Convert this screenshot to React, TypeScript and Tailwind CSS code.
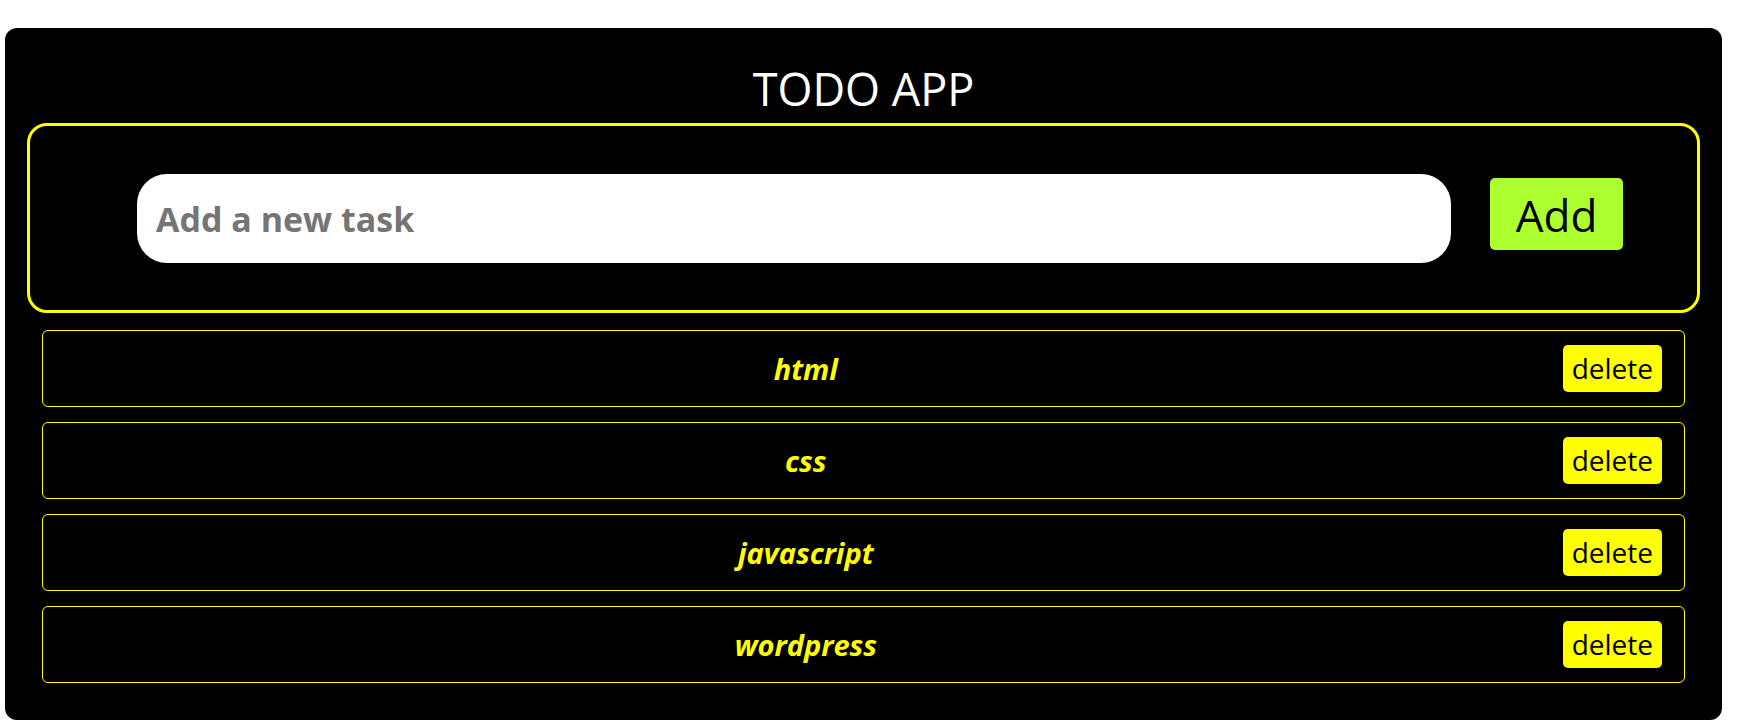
import { useState } from "react";

const initialTasks = ["html", "css", "javascript", "wordpress"];

export default function App() {
  const [tasks, setTasks] = useState(initialTasks);
  const [value, setValue] = useState("");

  const addTask = () => {
    if (!value.trim()) return;
    setTasks([...tasks, value.trim()]);
    setValue("");
  };

  return (
    <div className="min-h-[727px] bg-white pt-[28px] font-['Open_Sans',sans-serif]">
      <div className="ml-[5px] w-[1717px] rounded-[12px] bg-black pb-[37px] pt-[36px]">
        {/* Title */}
        <h1 className="text-center text-[45px] font-normal leading-[50px] text-white">TODO APP</h1>

        {/* Input box */}
        <div className="mx-[22px] mt-[9px] flex h-[190px] items-start rounded-[20px] border-[3px] border-[#ffff00]">
          <input
            value={value}
            onChange={(e) => setValue(e.target.value)}
            placeholder="Add a new task"
            className="ml-[107px] mt-[48px] h-[89px] w-[1314px] rounded-[30px] bg-white pl-[19px] text-[34px] font-bold text-[#333] outline-none placeholder:text-[#757575]"
          />
          <button
            onClick={addTask}
            className="ml-[39px] mt-[52px] h-[72px] w-[133px] rounded-[5px] bg-[#adff2f] pt-[2px] text-[44px] leading-[70px] text-black"
          >
            Add
          </button>
        </div>

        {/* Task list */}
        <div className="mx-[37px] mt-[17px] flex flex-col gap-[15px]">
          {tasks.map((task, i) => (
            <div
              key={task + i}
              className="flex h-[77px] items-center rounded-[6px] border border-[#ffff00] pl-[6px] pr-[22px]"
            >
              <span className="flex-1 text-center text-[29px] font-bold italic text-[#ffff00]">{task}</span>
              <button
                onClick={() => setTasks(tasks.filter((_, j) => j !== i))}
                className="h-[47px] rounded-[5px] bg-[#ffff00] px-[9px] text-[28px] leading-[47px] text-black"
              >
                delete
              </button>
            </div>
          ))}
        </div>
      </div>
    </div>
  );
}
